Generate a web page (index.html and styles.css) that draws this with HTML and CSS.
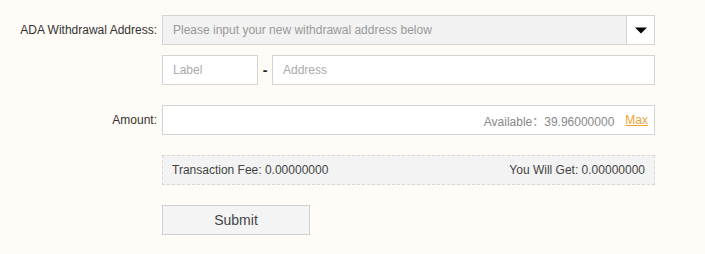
FILE: index.html
```html
<!DOCTYPE html>
<html lang="en">
<head>
    <meta charset="UTF-8">
    <meta name="viewport" content="width=device-width, initial-scale=1.0">
    <title>Withdraw ADA</title>
    <link rel="stylesheet" href="styles.css">
</head>
<body>
    <form class="withdraw-form" onsubmit="return false">
        <div class="form-row">
            <label class="form-label" for="address-select">ADA Withdrawal Address:</label>
            <div class="address-select">
                <input id="address-select" class="select-text" type="text" placeholder="Please input your new withdrawal address below" readonly>
                <span class="select-arrow">
                    <svg width="12" height="7" viewBox="0 0 12 7"><path d="M0 0.5 H12 L6 6.5 Z" fill="#000"/></svg>
                </span>
            </div>
        </div>

        <div class="form-row new-address">
            <span class="form-label"></span>
            <input class="text-input label-input" type="text" placeholder="Label">
            <span class="dash">-</span>
            <input class="text-input address-input" type="text" placeholder="Address">
        </div>

        <div class="form-row amount-row">
            <label class="form-label" for="amount">Amount:</label>
            <div class="amount-box">
                <input id="amount" class="amount-input" type="text">
                <span class="available">Available：39.96000000</span>
                <a class="max-link" href="#">Max</a>
            </div>
        </div>

        <div class="form-row">
            <span class="form-label"></span>
            <div class="fee-box">
                <span>Transaction Fee: 0.00000000</span>
                <span>You Will Get: 0.00000000</span>
            </div>
        </div>

        <div class="form-row">
            <span class="form-label"></span>
            <button class="submit-btn" type="submit">Submit</button>
        </div>
    </form>
</body>
</html>
```

FILE: styles.css
```css
body {
    font-family: 'Liberation Sans', Arial, 'Noto Sans CJK SC', sans-serif;
    font-size: 12px;
    margin: 0;
    padding: 0;
    background-color: #fffbf6;
    color: #333;
}
.withdraw-form {
    padding-top: 15px;
}
.form-row {
    display: flex;
    align-items: center;
    margin-bottom: 10px;
}
.amount-row {
    margin-top: 20px;
    margin-bottom: 20px;
}
.new-address {
    margin-bottom: 10px;
}
.form-row + .form-row + .form-row + .form-row {
    margin-bottom: 20px;
}
.form-label {
    width: 157px;
    margin-right: 5px;
    text-align: right;
    flex-shrink: 0;
}
input {
    font-family: inherit;
    font-size: 12px;
    color: #333;
    outline: none;
}
input::placeholder {
    color: #aaa;
}
.address-select {
    display: flex;
    width: 493px;
    height: 30px;
    box-sizing: border-box;
    border: 1px solid #d3d3d3;
}
.select-text {
    flex: 1;
    border: none;
    padding: 0 10px;
    background-color: #f2f2f2;
}
.select-text::placeholder {
    color: #999;
}
.select-arrow {
    display: flex;
    align-items: center;
    justify-content: center;
    width: 27px;
    border-left: 1px solid #d3d3d3;
    background-color: #fff;
}
.text-input {
    height: 30px;
    box-sizing: border-box;
    border: 1px solid #d3d3d3;
    padding: 0 10px;
    background-color: #fff;
}
.label-input {
    width: 96px;
}
.dash {
    width: 14px;
    text-align: center;
    font-size: 14px;
    font-weight: bold;
    color: #222;
}
.address-input {
    width: 383px;
}
.amount-box {
    display: flex;
    align-items: center;
    width: 493px;
    height: 30px;
    box-sizing: border-box;
    border: 1px solid #d3d3d3;
    padding-right: 6px;
    background-color: #fff;
}
.amount-input {
    flex: 1;
    min-width: 0;
    height: 100%;
    border: none;
    padding: 0 10px;
    background: transparent;
}
.available {
    color: #888;
}
.max-link {
    margin-left: 11px;
    color: #f0a336;
    text-decoration: underline;
}
.fee-box {
    display: flex;
    justify-content: space-between;
    align-items: center;
    width: 493px;
    height: 30px;
    box-sizing: border-box;
    padding: 0 9px;
    border: 1px dashed #d6d6d6;
    background-color: #f3f3f3;
    color: #444;
}
.submit-btn {
    width: 148px;
    height: 30px;
    border: 1px solid #cfcfcf;
    background-color: #f4f4f4;
    font-family: inherit;
    font-size: 14px;
    color: #444;
    cursor: pointer;
}
```
